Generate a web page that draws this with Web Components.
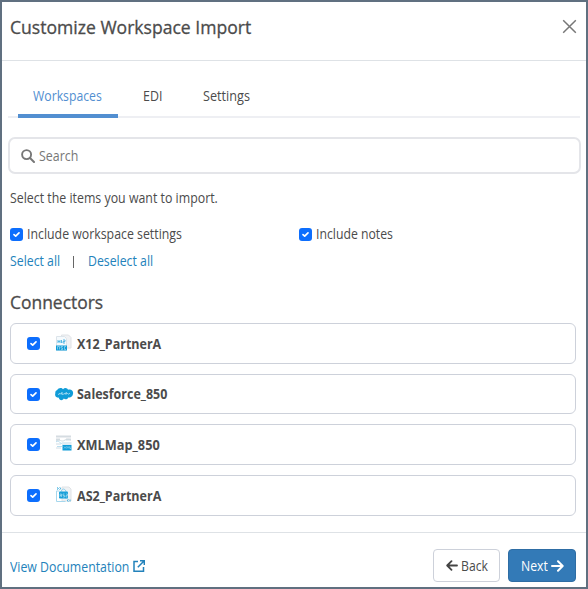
<!DOCTYPE html>
<html lang="en"><head><meta charset="utf-8"><title>Customize Workspace Import</title>
<style>
html,body{margin:0;height:100%}
body{font:14px/20px "Open Sans","Noto Sans",sans-serif;color:#4b4b4b;overflow:hidden}
</style></head><body>
<import-dialog></import-dialog>
<script>
const define=(name,html,setup)=>customElements.define(name,class extends HTMLElement{
  connectedCallback(){
    if(this.shadowRoot)return;
    const t=document.createElement('template');
    t.innerHTML='<style>:host,*{box-sizing:border-box}svg{display:block}</style>'+html;
    this.attachShadow({mode:'open'}).append(t.content.cloneNode(true));
    if(setup)setup(this,this.shadowRoot);
  }
});

// Label whose text is condensed to the width given by w.
define('fit-text',`<style>:host{display:block;white-space:nowrap;height:20px;flex:none}
span{display:inline-block;transform-origin:0 50%}</style><span><slot></slot></span>`,(el,root)=>{
  const s=root.querySelector('span'),w=+el.getAttribute('w');
  el.style.width=w+'px';
  s.style.transform='scaleX('+w/s.offsetWidth+')';
});

define('check-box',`<style>:host{display:block;width:13px;height:13px;flex:none}</style>
<svg width="13" height="13"><rect width="13" height="13" rx="3" fill="#0d6efd"/><path d="M4 6.6 5.7 8.1 9 4.9" fill="none" stroke="#fff" stroke-width="1.7" stroke-linecap="round" stroke-linejoin="round"/></svg>`);

const icons={
x12:`<path d="M6.5 1h7l2.5 2.5V14H6z" fill="#f1f2f4" stroke="#dfe2e6"/><path d="M1.5 2.5h8l2 2V16h-10z" fill="#f5fafd" stroke="#dce4ea"/><path d="M3 6v3M5 6v3M3 7.5h2M6.5 6v3M8 6h2v1.5H8V9h2" fill="none" stroke="#58b9e4"/><rect x="1" y="11.5" width="11" height="5" fill="#109cd8"/><path d="M2.5 15.5v-3h2v3M8 12.5H6V14h1.5v1.5H6M11 12.5H9.5v3H11" fill="none" stroke="#b5e2f5" stroke-width=".6"/>`,
sales:`<path transform="translate(0 2)" d="M2 3.2C3.6.3 6.9.5 8 2.2c1.8-2.1 4.5-1.1 5 .6 2.8-1.2 5.8.8 5 4.2-.4 2.7-2.8 4-4.5 3.3-1 2.3-3.5 2.5-4.7 1.2C7.5 14 4.3 13.6 3.6 10.6.8 11-.6 8.3.4 6.1 0 4.8.8 3.5 2 3.2Z" fill="#109cd8"/><path d="M3 9.3h1.2l.6-1.2L6 9.3l1-2v2h1.5l.8-1 .8 1 1.2-2v2l1.2-1.2 1 1.2L15 8" fill="none" stroke="#b8e3f6" stroke-width=".8"/>`,
map:`<path d="M1 1.5h15M1 4.5h4m6 0h5" stroke="#d5dce1" stroke-width="2"/><path d="M1 6c4-3 5 2 9-1 2-1 4-1 6 0M1 9h5M1 13h5" fill="none" stroke="#d1dce3"/><path d="M1 7c3-3 4 3 7 1h8M2 11.5h5" fill="none" stroke="#a8d5eb" stroke-width=".8"/><rect x="7" y="7" width="9.5" height="3" fill="#e1edf4"/><rect x="7.5" y="10" width="9" height="5.5" fill="#109cd8"/><path d="m9 11.5 2 2m0-2-2 2m3 0v-2l1 1 1-1v2m1-2v2h1" fill="none" stroke="#a9ddf3" stroke-width=".6"/>`,
as2:`<path d="M7 1h7l2 2v12H7z" fill="#f0f2f4" stroke="#e0e3e6"/><path d="M4.5 5H1.5v10.5h9M10 12h3" fill="none" stroke="#a6d7ed"/><path d="m2 1.5 1.5 1L2 3.5M4.5 1.5 6 2.5l-1.5 1M13.5 13.5l-1.5 1 1.5 1m1.5-2v2" fill="none" stroke="#45b1df"/><path d="M6 6V5q2.5-4 5 0v1" fill="none" stroke="#8ed0ec"/><rect x="4" y="5.5" width="9" height="7" rx="1" fill="#1ba0d9"/><path d="M5 11V8h1.5v3M5 9.5h1.5M9.5 8H8v1.5h1.5V11H8m3-3h1.5v1.5H11V11h1.5" fill="none" stroke="#bbe4f5" stroke-width=".6"/>`};

define('connector-row',`<style>:host{display:flex;align-items:center;height:41px;border:1px solid #cdd1da;border-radius:6px;padding-left:16px;font-weight:700;margin-bottom:10px}
.icon{margin:-1px 3px 0 15px}</style><check-box></check-box><svg class="icon" width="19" height="18"></svg><slot></slot>`,(el,root)=>{
  root.querySelector('.icon').innerHTML=icons[el.getAttribute('icon')];
});

define('tab-bar',`<style>:host{display:flex;height:57px;margin:0 6px;border-bottom:2px solid #eeeff3;padding-left:10px}
div{height:57px;padding:25px 15px 0;margin-right:10px}.active{border-bottom:4px solid #528fd1;color:#528fd1;width:100px}</style>
<div class="active"><fit-text w="69">Workspaces</fit-text></div><div><fit-text w="19.5">EDI</fit-text></div><div style="padding-left:15px"><fit-text w="47">Settings</fit-text></div>`);

define('search-field',`<style>:host{display:flex;align-items:center;margin:19px 5px 0 6px;height:37px;border:2px solid #e4e5e9;border-radius:7px;padding-left:11px;color:#777}svg{margin-right:4px}</style>
<svg width="14" height="14"><circle cx="5.6" cy="5.6" r="4.5" fill="none" stroke="#777" stroke-width="1.9"/><path d="m9 9 4 4" stroke="#777" stroke-width="2" stroke-linecap="round"/></svg><fit-text w="39">Search</fit-text>`);

define('action-button',`<style>:host{display:flex;align-items:center;justify-content:center;gap:3px;height:33px;border:1px solid #cdd1da;border-radius:4px;width:67px;color:#4b4b4b}
:host([primary]){width:68px;background:#337ab7;border-color:#2e6da4;color:#fff}</style><slot></slot>`);

define('import-dialog',`<style>
:host{display:flex;flex-direction:column;height:589px;border:2px solid #607080;background:#fff}
header{height:59px;flex:none;border-bottom:1px solid #dee2e6;display:flex;justify-content:space-between;padding:15px 9px 0 8px;font-size:18px;font-weight:500;-webkit-text-stroke:.3px}
tab-bar,search-field{flex:none}
main{padding:0 10px 0 8px;height:358px;flex:none}
.intro{margin-top:14px}.checks{display:flex;align-items:center;margin-top:16px;gap:4px}
.checks check-box:nth-of-type(2){margin-left:113px}
.links{display:flex;margin-top:7px;color:#2382bb}
.links i{width:1px;height:12px;background:#666;margin:5px 14px 0 13px}
.title{font-size:18px;font-weight:500;-webkit-text-stroke:.3px;margin:21px 0 11px}
footer{height:55px;border-top:1px solid #dee2e6;padding:16px 10px 0 8px;display:flex;color:#2382bb}
.doc{display:flex;gap:3.5px;margin-top:8px;flex:1}.doc svg{margin-top:3px}
action-button+action-button{margin-left:8px}
</style>
<header><fit-text w="241">Customize Workspace Import</fit-text><svg width="15" height="15" style="margin-top:2px"><path d="m1.2 1.2 12.6 12.6M13.8 1.2 1.2 13.8" stroke="#777" stroke-width="1.5"/></svg></header>
<tab-bar></tab-bar><search-field></search-field>
<main>
<fit-text class="intro" w="207.5">Select the items you want to import.</fit-text>
<div class="checks"><check-box></check-box><fit-text w="155">Include workspace settings</fit-text><check-box></check-box><fit-text w="77">Include notes</fit-text></div>
<div class="links"><fit-text w="50">Select all</fit-text><i></i><fit-text w="65">Deselect all</fit-text></div>
<fit-text class="title" w="93">Connectors</fit-text>
<connector-row icon="x12"><fit-text w="84">X12_PartnerA</fit-text></connector-row>
<connector-row icon="sales" style="height:40px"><fit-text w="90">Salesforce_850</fit-text></connector-row>
<connector-row icon="map"><fit-text w="83">XMLMap_850</fit-text></connector-row>
<connector-row icon="as2"><fit-text w="84">AS2_PartnerA</fit-text></connector-row>
</main>
<footer><div class="doc"><fit-text w="119.5">View Documentation</fit-text><svg width="12" height="12"><path d="M5 1.5H1v9.8h9.5V7M7 .8h4.3V5M11 1 4.8 7.2" fill="none" stroke="#2382bb" stroke-width="1.5"/></svg></div>
<action-button><svg width="12" height="11"><path d="M11 5.5H1.5M5.5 1.2 1.2 5.5l4.3 4.3" fill="none" stroke="#444" stroke-width="1.8" stroke-linecap="round" stroke-linejoin="round"/></svg><fit-text w="27">Back</fit-text></action-button>
<action-button primary><fit-text w="27">Next</fit-text><svg width="13" height="12"><path d="M1 6h10.5M7 1.3 11.7 6 7 10.7" fill="none" stroke="#fff" stroke-width="2" stroke-linecap="round" stroke-linejoin="round"/></svg></action-button>
</footer>`);
</script></body></html>
